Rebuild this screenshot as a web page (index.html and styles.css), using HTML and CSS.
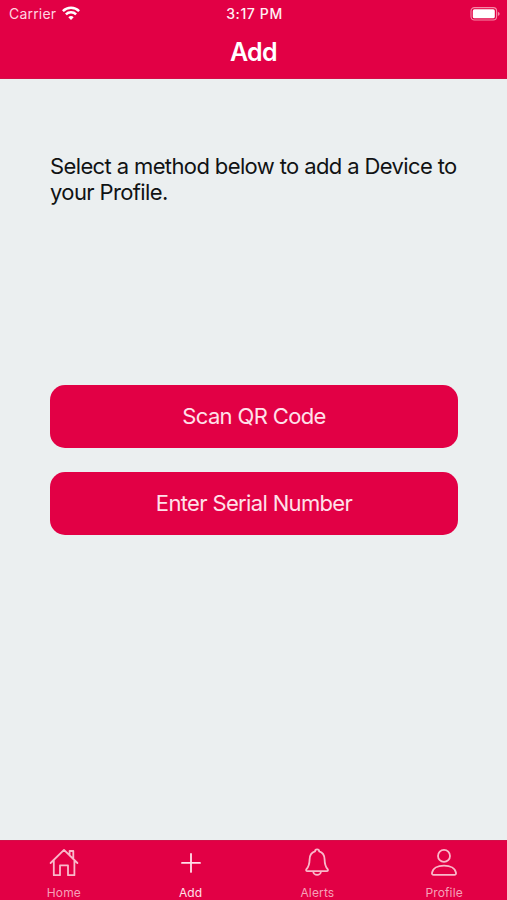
FILE: index.html
```html
<!DOCTYPE html>
<html lang="en">
<head>
    <meta charset="UTF-8">
    <meta name="viewport" content="width=device-width, initial-scale=1.0">
    <title>Add</title>
    <link rel="stylesheet" href="styles.css">
</head>
<body>
    <header class="header">
        <div class="status-bar">
            <div class="carrier">
                <span>Carrier</span>
                <svg class="wifi" width="18" height="14" viewBox="0 0 18 14" fill="none" stroke="#fff" stroke-width="2.5">
                    <path d="M0.9 5.1a11.6 11.6 0 0 1 16.2 0"/>
                    <path d="M3.9 8.4a7.3 7.3 0 0 1 10.2 0"/>
                    <path d="M9 14L6.3 11.2a3.9 3.9 0 0 1 5.4 0z" fill="#fff" stroke="none"/>
                </svg>
            </div>
            <div class="time">3:17 PM</div>
            <svg class="battery" width="30" height="14" viewBox="0 0 30 14">
                <rect x="1" y="0.6" width="25.6" height="12.4" rx="3.4" fill="none" stroke="#f58aa8" stroke-width="1.1"/>
                <rect x="2.8" y="2.3" width="22" height="9" rx="1.6" fill="#fff"/>
                <path d="M27.9 4.7c2.3 0.8 2.3 3.4 0 4.2z" fill="#f58aa8"/>
            </svg>
        </div>
        <h1>Add</h1>
    </header>

    <main class="content">
        <p>Select a method below to add a Device to your Profile.</p>
        <div class="buttons">
            <button type="button" class="scan">Scan QR Code</button>
            <button type="button" class="serial">Enter Serial Number</button>
        </div>
    </main>

    <nav class="tab-bar">
        <a href="#home" class="tab">
            <svg width="32" height="32" viewBox="0 0 32 32">
                <path d="M2.6 16L16 2.9 29.4 16M5.8 13.6V28.2H12V18.4H20V28.2H26.4V13.6M21.6 8V4H25.3V11.8"/>
            </svg>
            <span>Home</span>
        </a>
        <a href="#add" class="tab active">
            <svg width="32" height="32" viewBox="0 0 32 32">
                <path d="M16 6.9V24.9M7 15.9H25"/>
            </svg>
            <span>Add</span>
        </a>
        <a href="#alerts" class="tab">
            <svg width="32" height="32" viewBox="0 0 32 32">
                <path d="M14 4.4a2.1 2.1 0 0 1 4.2 0C22 5.5 23.5 8.4 23.6 12.4C23.7 17.7 24.6 19.8 26.6 22.1C27.4 23.3 26.9 24.1 25.7 24.1H6.4C5.2 24.1 4.7 23.3 5.5 22.1C7.5 19.8 8.5 17.7 8.6 12.4C8.7 8.4 10.2 5.5 14 4.4zM12.3 24.5a3.8 3.4 0 0 0 7.6 0"/>
            </svg>
            <span>Alerts</span>
        </a>
        <a href="#profile" class="tab">
            <svg width="32" height="32" viewBox="0 0 32 32">
                <circle cx="16" cy="8.9" r="6"/>
                <path d="M4 25.8C4.8 21.3 9.6 18.6 16 18.6s11.2 2.7 12 7.2c0.2 1.3-0.4 2-1.6 2H5.6c-1.2 0-1.8-0.7-1.6-2z"/>
            </svg>
            <span>Profile</span>
        </a>
    </nav>
</body>
</html>
```

FILE: styles.css
```css
* {
    box-sizing: border-box;
}
body {
    margin: 0;
    height: 900px;
    display: flex;
    flex-direction: column;
    font-family: Inter, "Liberation Sans", sans-serif;
    background-color: #ebeff0;
    overflow: hidden;
}
.header {
    height: 79px;
    background-color: #e20045;
    border-bottom: 1px solid #d30f48;
    color: #fff;
}
.status-bar {
    height: 28px;
    padding: 0 7px 0 9px;
    display: grid;
    grid-template-columns: 1fr auto 1fr;
    align-items: center;
    font-size: 14px;
    line-height: 28px;
}
.carrier {
    display: flex;
    align-items: center;
    gap: 6px;
    color: #ffd5e0;
    letter-spacing: 0.2px;
}
.wifi {
    margin-bottom: 2px;
}
.time {
    font-size: 14px;
    font-weight: 500;
    letter-spacing: 0.6px;
    color: #fff0f4;
}
.battery {
    justify-self: end;
    margin-bottom: 1px;
}
.header h1 {
    margin: 7px 0 0;
    font-size: 25px;
    line-height: 34px;
    font-weight: 600;
    letter-spacing: -0.6px;
    text-align: center;
}
.content {
    flex: 1;
    padding: 74px 45px 0 50px;
}
.content p {
    height: 52px;
    margin: 0;
    font-size: 22px;
    line-height: 26px;
    letter-spacing: -0.62px;
    color: #111314;
}
.buttons {
    margin: 179.5px 4px 0 0;
    display: flex;
    flex-direction: column;
    gap: 24px;
}
.buttons button {
    height: 63px;
    padding: 0;
    border: none;
    border-radius: 15px;
    background-color: #e20045;
    color: #ffe0e9;
    font-family: inherit;
    font-size: 22px;
    letter-spacing: -0.65px;
}
.tab-bar {
    height: 60px;
    display: flex;
    background-color: #e20045;
    border-top: 1px solid #d30f48;
}
.tab {
    flex: 1;
    display: flex;
    flex-direction: column;
    align-items: center;
    padding: 6px 0 0 1px;
    color: #f6a0b8;
    font-size: 12px;
    line-height: 16px;
    letter-spacing: 0.15px;
    text-decoration: none;
}
.tab svg {
    flex-shrink: 0;
    fill: none;
    stroke: #f9b9ca;
    stroke-width: 1.8;
    stroke-linejoin: round;
    stroke-linecap: round;
}
.tab span {
    margin-top: 6px;
}
.tab.active {
    color: #ffe0e9;
}
.tab.active svg {
    stroke: #ffe0e9;
}
```
